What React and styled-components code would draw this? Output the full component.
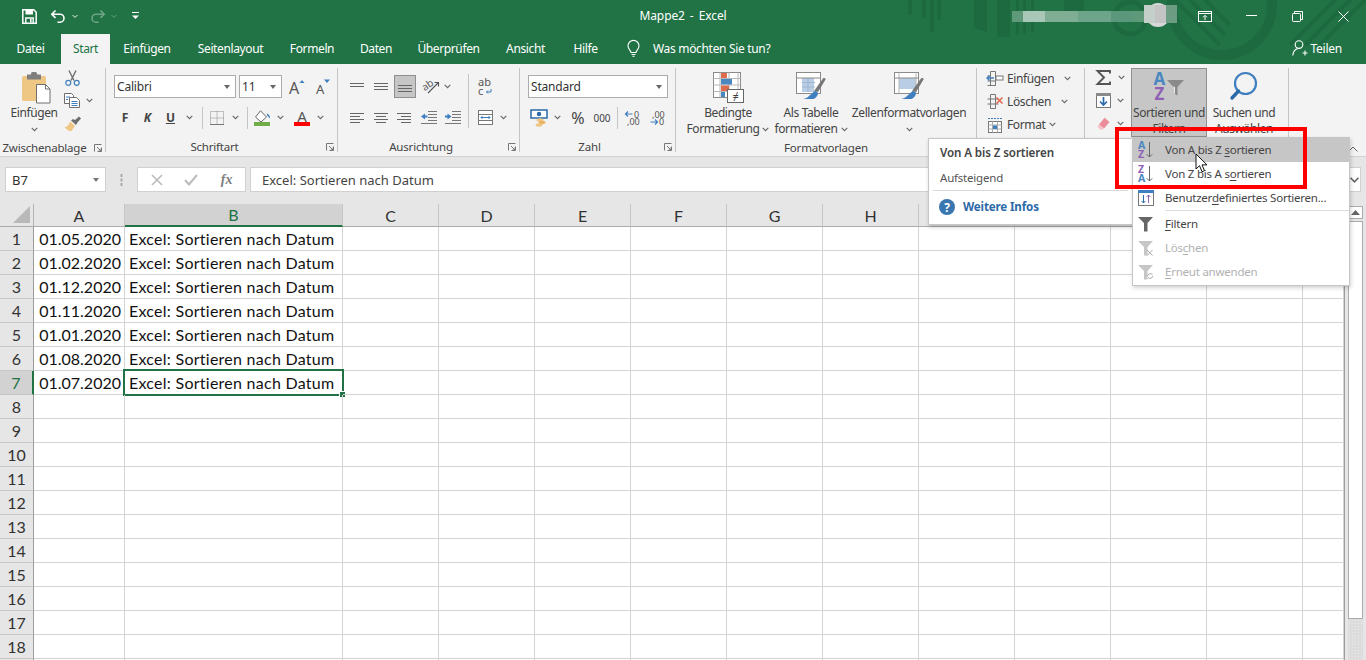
import React from "react";
import styled, { createGlobalStyle } from "styled-components";

const GlobalStyle = createGlobalStyle`
  html, body { margin: 0; padding: 0; background: #fff; }
  body { width: 1366px; height: 660px; overflow: hidden; font-family: "Noto Sans", "Liberation Sans", sans-serif; font-size: 12px; color: #444; }
  svg { display: block; flex: none; overflow: visible; }
`;

const Page = styled.div`
  position: relative;
  width: 1366px;
  height: 660px;
  overflow: hidden;
`;

/* ---------- header ---------- */
const Header = styled.div`
  position: relative;
  height: 64px;
  background: #217346;
  color: #fff;
`;
const HeaderArt = styled.svg`
  position: absolute;
  left: 0;
  top: 0;
`;
const TitleBar = styled.div`
  position: relative;
  height: 32px;
  display: grid;
  grid-template-columns: 1fr auto 1fr;
  align-items: center;
`;
const Qat = styled.div`
  display: flex;
  align-items: center;
  padding-left: 22px;
`;
const QatSlot = styled.span`
  width: ${(p) => p.$w}px;
  margin-left: ${(p) => p.$ml || 0}px;
  display: flex;
  justify-content: center;
`;
const Title = styled.div`
  font-size: 12px;
  letter-spacing: -0.1px;
  word-spacing: 2px;
  margin-top: -1px;
`;
const WindowButtons = styled.div`
  display: flex;
  justify-content: flex-end;
  align-items: center;
`;
const WinSlot = styled.span`
  width: 46px;
  display: flex;
  justify-content: center;
`;
const TabBar = styled.div`
  position: relative;
  height: 32px;
  display: flex;
  align-items: flex-end;
`;
const Tab = styled.div`
  width: ${(p) => p.$w}px;
  height: 30px;
  display: flex;
  align-items: center;
  justify-content: center;
  padding-bottom: 2px;
  box-sizing: border-box;
  font-size: 12px;
  letter-spacing: -0.38px;
  background: ${(p) => (p.$active ? "#f3f3f3" : "transparent")};
  color: ${(p) => (p.$active ? "#217346" : "#fff")};
`;
const TellMe = styled.div`
  display: flex;
  align-items: center;
  gap: 13px;
  height: 30px;
  padding: 0 0 2px 15px;
  box-sizing: border-box;
  font-size: 12px;
  letter-spacing: -0.32px;
`;
const Share = styled.div`
  margin-left: auto;
  display: flex;
  align-items: center;
  gap: 3px;
  height: 30px;
  padding: 0 24px 2px 0;
  box-sizing: border-box;
  font-size: 12px;
  letter-spacing: -0.25px;
`;

/* ---------- ribbon ---------- */
const Ribbon = styled.div`
  height: 93px;
  box-sizing: border-box;
  background: #f3f3f3;
  border-bottom: 1px solid #d2d2d2;
  display: flex;
  padding-top: 4px;
`;
const Group = styled.div`
  width: ${(p) => p.$w}px;
  height: 84px;
  box-sizing: border-box;
  border-right: 1px solid #c6c6c6;
  display: flex;
  flex-direction: column;
`;
const GroupBody = styled.div`
  height: 70px;
  display: flex;
  padding-left: ${(p) => p.$pl || 0}px;
`;
const Caption = styled.div`
  position: relative;
  height: 13px;
  padding-top: 3px;
  line-height: 16px;
  text-align: center;
  padding-right: ${(p) => p.$pr || 0}px;
  font-size: 11.5px;
  letter-spacing: -0.2px;
  color: #444;
`;
const Launcher = styled.span`
  position: absolute;
  right: 3px;
  top: 7px;
`;
const Stack = styled.div`
  display: flex;
  flex-direction: column;
  padding-top: 7px;
  gap: 8px;
  width: ${(p) => (p.$w ? `${p.$w}px` : "auto")};
`;
const ToolRow = styled.div`
  height: 23px;
  display: flex;
  align-items: center;
`;
const Tool = styled.span`
  width: ${(p) => p.$w || 24}px;
  height: 23px;
  margin-left: ${(p) => p.$ml || 0}px;
  display: flex;
  align-items: center;
  justify-content: center;
  font-size: ${(p) => p.$fs || 12}px;
  font-weight: ${(p) => p.$fw || 400};
  font-style: ${(p) => (p.$it ? "italic" : "normal")};
  text-decoration: ${(p) => (p.$ul ? "underline" : "none")};
  color: #444;
`;
const ActiveTool = styled(Tool)`
  box-sizing: border-box;
  background: #c6c6c6;
  border: 1px solid #8f8f8f;
`;
const RowSep = styled.span`
  width: 1px;
  height: 22px;
  margin: 0 ${(p) => p.$mr || 2}px 0 ${(p) => p.$ml || 2}px;
  background: #c6c6c6;
`;
const ColSep = styled.div`
  width: 1px;
  height: 54px;
  margin: 6px 3px 0 3px;
  background: #c6c6c6;
`;
const Select = styled.div`
  width: ${(p) => p.$w}px;
  height: 23px;
  margin-left: ${(p) => p.$ml || 0}px;
  box-sizing: border-box;
  border: 1px solid #ababab;
  background: #fff;
  display: flex;
  align-items: center;
  justify-content: space-between;
  padding: 0 5px 0 2px;
  font-size: 12px;
  letter-spacing: -0.2px;
  color: #333;
`;
const DownTri = styled.span`
  width: 0;
  height: 0;
  border-left: 3.5px solid transparent;
  border-right: 3.5px solid transparent;
  border-top: 4px solid ${(p) => p.$c || "#666"};
`;
const LargeButton = styled.div`
  width: ${(p) => p.$w}px;
  height: 69px;
  margin-left: ${(p) => p.$ml || 0}px;
  box-sizing: border-box;
  display: flex;
  flex-direction: column;
  align-items: center;
  padding-top: 4px;
  font-size: 12px;
  letter-spacing: -0.4px;
  line-height: 16px;
  color: #444;
  white-space: nowrap;
  background: ${(p) => (p.$on ? "#c6c6c6" : "transparent")};
  outline: ${(p) => (p.$on ? "1px solid #8f8f8f" : "none")};
  outline-offset: -1px;
`;
const LargeIcon = styled.div`
  height: 33px;
  margin-left: ${(p) => p.$ml || 0}px;
`;
const LabelLine = styled.div`
  height: 16px;
  display: flex;
  align-items: center;
  gap: 3px;
`;
const CellsStack = styled.div`
  display: flex;
  flex-direction: column;
  margin-top: ${(p) => p.$mt || 0}px;
`;
const CellsRow = styled.div`
  height: 23px;
  display: flex;
  align-items: center;
  gap: 4px;
  font-size: 12px;
  letter-spacing: -0.38px;
  color: #444;
`;
const CellsText = styled.span`
  width: ${(p) => p.$w}px;
`;
const CollapseSlot = styled.div`
  margin-left: auto;
  padding: 78px 8px 0 0;
`;

/* ---------- formula bar ---------- */
const FormulaRow = styled.div`
  height: 47px;
  box-sizing: border-box;
  background: #e6e6e6;
  padding: 10px 5px 0 5px;
  display: flex;
`;
const InputBox = styled.div`
  height: 25px;
  box-sizing: border-box;
  background: #fff;
  border: 1px solid #d0d0d0;
  display: flex;
  align-items: center;
`;
const NameBox = styled(InputBox)`
  width: 101px;
  justify-content: space-between;
  padding: 0 6px;
  font-size: 13px;
  color: #333;
`;
const GripSlot = styled.div`
  width: 31px;
  height: 25px;
  display: flex;
  align-items: center;
  justify-content: center;
`;
const ActionsBox = styled(InputBox)`
  width: 109px;
  justify-content: space-around;
  padding: 0 2px 0 2px;
  margin-right: 4px;
`;
const FormulaInput = styled(InputBox)`
  flex: 1;
  padding-left: 11px;
  font-size: 13px;
  color: #444;
`;
const ExpandBox = styled(InputBox)`
  width: 12px;
  justify-content: center;
  border-left: 0;
`;
const FxMark = styled.span`
  font-family: "Liberation Serif", serif;
  font-style: italic;
  font-size: 14px;
  font-weight: 700;
  color: #808080;
  margin-left: 2px;
`;

/* ---------- sheet ---------- */
const SheetArea = styled.div`
  display: flex;
  height: 456px;
  overflow: hidden;
`;
const Grid = styled.div`
  width: 1344px;
  display: grid;
  grid-template-columns: 34px 91px 218px repeat(10, 96px) 41px;
  grid-template-rows: 23px;
  grid-auto-rows: 24px;
  align-content: start;
  background: #fff;
  font-family: Lato, "Liberation Sans", sans-serif;
  font-size: 16px;
  color: #111;
`;
const Corner = styled.div`
  box-sizing: border-box;
  background: #e6e6e6;
  border-right: 1px solid #b4b4b4;
  border-bottom: 1px solid #ababab;
  display: flex;
  align-items: flex-end;
  justify-content: flex-end;
  padding: 0 3px 3px 0;
`;
const ColHead = styled.div`
  box-sizing: border-box;
  background: ${(p) => (p.$on ? "#d2d2d2" : "#e6e6e6")};
  color: ${(p) => (p.$on ? "#217346" : "#333")};
  border-right: 1px solid #c6c6c6;
  border-bottom: ${(p) => (p.$on ? "2px solid #217346" : "1px solid #ababab")};
  display: flex;
  align-items: center;
  justify-content: center;
`;
const RowHead = styled.div`
  box-sizing: border-box;
  background: ${(p) => (p.$on ? "#d2d2d2" : "#e6e6e6")};
  color: ${(p) => (p.$on ? "#217346" : "#333")};
  border-right: ${(p) => (p.$on ? "2px solid #217346" : "1px solid #9c9c9c")};
  border-bottom: 1px solid #c6c6c6;
  display: flex;
  align-items: center;
  justify-content: center;
`;
const Cell = styled.div`
  position: relative;
  box-sizing: border-box;
  border-right: 1px solid #d4d4d4;
  border-bottom: 1px solid #d4d4d4;
  display: flex;
  align-items: center;
  white-space: nowrap;
  letter-spacing: ${(p) => (p.$right ? "0" : "0.26px")};
  justify-content: ${(p) => (p.$right ? "flex-end" : "flex-start")};
  padding: ${(p) => (p.$right ? "0 3px 0 0" : "0 0 0 4px")};
`;
const Selection = styled.div`
  position: absolute;
  left: -2px;
  top: -2px;
  right: -2px;
  bottom: -2px;
  border: 2px solid #217346;
`;
const FillHandle = styled.div`
  position: absolute;
  right: -4px;
  bottom: -4px;
  width: 5px;
  height: 5px;
  background: #217346;
  border: 1px solid #fff;
`;
const ScrollBar = styled.div`
  width: 22px;
  box-sizing: border-box;
  background: #e6e6e6;
  border-left: 1px solid #9c9c9c;
  padding: 2px 3px 0 3px;
  display: flex;
  flex-direction: column;
`;
const ScrollUp = styled.div`
  height: 13px;
  margin-bottom: 2px;
  display: flex;
  align-items: center;
  justify-content: center;
  background: #fff;
  border: 1px solid #ababab;
  box-sizing: border-box;
`;
const Thumb = styled.div`
  height: 398px;
  box-sizing: border-box;
  background: #fff;
  border: 1px solid #ababab;
`;
const Track = styled.div`
  flex: 1;
  background-color: #dcdcdc;
  background-image: radial-gradient(#eaeaea 0.6px, transparent 0.7px);
  background-size: 3px 3px;
`;

/* ---------- overlays ---------- */
const Tip = styled.div`
  position: absolute;
  left: 928px;
  top: 138px;
  width: 205px;
  height: 87px;
  box-sizing: border-box;
  background: #fff;
  border: 1px solid #c6c6c6;
  box-shadow: 1px 2px 4px rgba(0, 0, 0, 0.22);
  padding: 0 4px;
  line-height: 16px;
  color: #555;
`;
const TipTitle = styled.div`
  padding: 6px 0 0 7px;
  font-size: 11.6px;
  font-weight: 600;
  letter-spacing: -0.1px;
  color: #444;
`;
const TipText = styled.div`
  height: 30px;
  box-sizing: border-box;
  padding: 9px 0 0 7px;
  border-bottom: 1px solid #d8d8d8;
  font-size: 11.5px;
  letter-spacing: -0.2px;
`;
const TipLink = styled.div`
  display: flex;
  align-items: center;
  gap: 8px;
  padding: 8px 0 0 6px;
  font-size: 11.6px;
  font-weight: 700;
  letter-spacing: -0.15px;
  color: #2b6aa8;
`;
const Menu = styled.div`
  position: absolute;
  left: 1132px;
  top: 137px;
  width: 218px;
  height: 149px;
  box-sizing: border-box;
  background: #fff;
  border: 1px solid #c6c6c6;
  box-shadow: 1px 2px 4px rgba(0, 0, 0, 0.18);
`;
const MenuItem = styled.div`
  height: 24px;
  display: flex;
  align-items: center;
  font-size: 11.5px;
  letter-spacing: -0.23px;
  background: ${(p) => (p.$hover ? "#c6c6c6" : "transparent")};
  color: ${(p) => (p.$off ? "#b1b1b1" : "#444")};
  u { text-underline-offset: 2px; }
`;
const MenuLabel = styled.span`
  padding-bottom: 2px;
`;
const MenuIcon = styled.span`
  width: 27px;
  padding-left: 5px;
  display: flex;
`;
const MenuSep = styled.div`
  height: 1px;
  margin: 0 0 1px 32px;
  background: #dedede;
`;
const RedBox = styled.div`
  position: absolute;
  left: 1115px;
  top: 127px;
  width: 192px;
  height: 62px;
  box-sizing: border-box;
  border: 4px solid #f00;
`;
const Cursor = styled.svg`
  position: absolute;
  left: 1195px;
  top: 153px;
`;

/* ---------- icons ---------- */
const Chev = ({ c = "#666", size = 7 }) => (
  <svg width={size} height={5} viewBox="0 0 7 5">
    <path d="M.7.8 3.5 3.6 6.3.8" fill="none" stroke={c} strokeWidth="1.1" />
  </svg>
);
const Line = ({ w = 14, lines }) => (
  <svg width={w} height={15} viewBox={`0 0 ${w} 15`}>
    {lines.map(([x1, x2, y], i) => (
      <rect key={i} x={x1} y={y} width={x2 - x1} height="1" fill="#666" />
    ))}
  </svg>
);
const SaveIcon = () => (
  <svg width="15" height="15" viewBox="0 0 15 15">
    <path d="M.8.8h11l2.4 2.4v11H.8z" fill="none" stroke="#fff" strokeWidth="1.5" />
    <rect x="3.5" y="1" width="7.5" height="4.5" fill="#fff" />
    <path d="M3.8 14V9h7.4v5" fill="none" stroke="#fff" strokeWidth="1.4" />
    <rect x="8" y="10" width="1.6" height="3.6" fill="#fff" />
  </svg>
);
const UndoIcon = ({ o = 1, flip }) => (
  <svg width="16" height="15" viewBox="0 0 16 15" opacity={o}>
    <path
      d="M5.500 1.500 1.800 5.200l3.700 3.700M2 5.200h8a4 4 0 0 1 0 8H7.500"
      fill="none"
      stroke="#fff"
      strokeWidth="1.6"
      transform={flip ? "matrix(-1 0 0 1 16 0)" : undefined}
    />
  </svg>
);
const CustomizeIcon = () => (
  <svg width="7" height="8" viewBox="0 0 7 8">
    <rect y="0" width="7" height="1" fill="#fff" />
    <path d="M0 3.500h7L3.500 7z" fill="#fff" />
  </svg>
);
const BulbIcon = () => (
  <svg width="13" height="17" viewBox="0 0 13 17">
    <path d="M4 12.500c0-2-3-3.200-3-6.600a5.500 5.500 0 0 1 11 0c0 3.400-3 4.600-3 6.600z" fill="none" stroke="#fff" strokeWidth="1.1" />
    <path d="M4.500 14.500h4M5.500 16.300h2" stroke="#fff" strokeWidth="1" />
  </svg>
);
const PersonIcon = () => (
  <svg width="16" height="16" viewBox="0 0 16 16">
    <circle cx="7" cy="4.600" r="3.800" fill="none" stroke="#fff" strokeWidth="1.1" />
    <path d="M.8 15.500c.3-3.700 2.400-6.200 5-7M10.500 13h5M13 10.500v5" fill="none" stroke="#fff" strokeWidth="1.1" />
  </svg>
);
const DisplayIcon = () => (
  <svg width="14" height="11" viewBox="0 0 14 11">
    <rect x=".5" y=".5" width="13" height="10" fill="none" stroke="#fff" />
    <path d="M1 2.500h12" stroke="#fff" />
    <path d="M7 9V4.500M5 6.300l2-2 2 2" fill="none" stroke="#fff" />
  </svg>
);
const MinIcon = () => (
  <svg width="11" height="2" viewBox="0 0 11 2"><rect width="11" height="1" fill="#fff" /></svg>
);
const RestoreIcon = () => (
  <svg width="11" height="11" viewBox="0 0 11 11">
    <rect x=".5" y="2.500" width="8" height="8" rx=".8" fill="none" stroke="#fff" />
    <path d="M2.500 2.500v-2h8v8h-2" fill="none" stroke="#fff" />
  </svg>
);
const CloseIcon = () => (
  <svg width="11" height="11" viewBox="0 0 11 11">
    <path d="M.5.500l10 10M10.500.500l-10 10" stroke="#fff" />
  </svg>
);
const PasteIcon = () => (
  <svg width="30" height="32" viewBox="0 0 30 32">
    <rect x="0" y="4" width="24" height="25" rx="1.500" fill="#eec785" />
    <rect x="5" y="2.500" width="14" height="5" fill="#7f7f7f" />
    <rect x="9" y="0" width="6" height="4" rx="1.500" fill="#7f7f7f" />
    <path d="M14.500 12.500h9l4.500 4.500v14h-13.500z" fill="#fff" stroke="#6e6e6e" />
    <path d="M23.500 12.500v4.500h4.500" fill="none" stroke="#6e6e6e" />
  </svg>
);
const CutIcon = () => (
  <svg width="15" height="16" viewBox="0 0 15 16">
    <path d="M4 .5l5 10M11 .5l-5 10" stroke="#6e6e6e" strokeWidth="1.4" />
    <circle cx="3.300" cy="12.800" r="2.500" fill="none" stroke="#3f7fbf" strokeWidth="1.2" />
    <circle cx="11.700" cy="12.800" r="2.500" fill="none" stroke="#3f7fbf" strokeWidth="1.2" />
  </svg>
);
const CopyIcon = () => (
  <svg width="16" height="15" viewBox="0 0 16 15">
    <path d="M.5.500h7l2 2v8h-9z" fill="#fff" stroke="#6e6e6e" />
    <path d="M5.500 4.500h7l3 3v7h-10z" fill="#fff" stroke="#6e6e6e" />
    <path d="M2 4h4M2 6.500h2M7.500 8.500h6M7.500 10.500h6M7.500 12.500h6" stroke="#3f7fbf" />
  </svg>
);
const BrushIcon = () => (
  <svg width="17" height="15" viewBox="0 0 17 15">
    <path d="M6 5.500l5 4.500-3.500 5H5L.5 11.500C3 11 5 8.500 6 5.500z" fill="#eec785" />
    <path d="M7 4.500l5 4.500 1.500-2.500L17 2.500 15 .5l-4 3.500-2-1z" fill="#6e6e6e" />
  </svg>
);
const GrowIcon = ({ small, up }) => (
  <svg width="18" height="18" viewBox="0 0 18 18">
    <text x={small ? 3 : 0} y="16" fontFamily="Noto Sans, sans-serif" fontSize={small ? 13 : 16} fill="#555">A</text>
    <path d={up ? "M10.500 5l2.500-3 2.500 3z" : "M11 1.500h6L14 5z"} fill="#3f7fbf" />
  </svg>
);
const BorderIcon = () => (
  <svg width="14" height="14" viewBox="0 0 14 14">
    <rect x=".5" y=".5" width="13" height="13" fill="none" stroke="#888" strokeDasharray="1 1" />
    <path d="M7 .5v13M.5 7h13" stroke="#888" strokeDasharray="1 1" />
    <path d="M0 13.500h14" stroke="#777" />
  </svg>
);
const FillIcon = () => (
  <svg width="17" height="16" viewBox="0 0 17 16">
    <path d="M6.500.8 12.500 7 7 12 1.500 7z" fill="#fff" stroke="#666" />
    <path d="M12.500 3.500c2 .5 3.500 2 3.500 5l-2.500-2.500z" fill="#3f7fbf" />
    <rect y="12" width="16" height="4" fill="#70ad47" />
  </svg>
);
const ColorIcon = () => (
  <svg width="16" height="16" viewBox="0 0 16 16">
    <text x="8" y="12" textAnchor="middle" fontFamily="Noto Sans, sans-serif" fontSize="15" fill="#555">A</text>
    <rect y="12" width="16" height="4" fill="#f00" />
  </svg>
);
const OrientIcon = () => (
  <svg width="17" height="17" viewBox="0 0 17 17">
    <text x="0" y="10" fontFamily="Noto Sans, sans-serif" fontSize="10" fill="#555" transform="rotate(-35 6 9)">ab</text>
    <path d="M5 15 15 5M11.500 4.500H15.500V8.500" fill="none" stroke="#555" strokeWidth="1.1" />
  </svg>
);
const WrapIcon = () => (
  <svg width="14" height="18" viewBox="0 0 14 18">
    <text x="0" y="8" fontFamily="Noto Sans, sans-serif" fontSize="11" fill="#555">ab</text>
    <text x="0" y="17" fontFamily="Noto Sans, sans-serif" fontSize="11" fill="#555">c</text>
    <path d="M13 11v3H8.500M10 12.500 8.500 14l1.500 1.500" fill="none" stroke="#3f7fbf" />
  </svg>
);
const IndentIcon = ({ out }) => (
  <svg width="16" height="13" viewBox="0 0 16 13">
    <path d="M7 .5h9M7 3.500h9M7 6.500h9M7 9.500h9M0 12.500h16" stroke="#777" />
    <path d={out ? "M0 5.500 4 2.500v2h2.500v2H4v2z" : "M6.500 5.500 2.500 2.500v2H0v2h2.500v2z"} fill="#3f7fbf" />
  </svg>
);
const MergeIcon = () => (
  <svg width="15" height="15" viewBox="0 0 15 15">
    <rect x=".5" y=".5" width="14" height="14" fill="#fff" stroke="#777" />
    <path d="M.5 4.500h14M.5 10.500h14" stroke="#777" />
    <path d="M3 7.500h9M4.500 6 3 7.500 4.500 9M10.500 6 12 7.500 10.500 9" fill="none" stroke="#3f7fbf" />
  </svg>
);
const CurrencyIcon = () => (
  <svg width="17" height="18" viewBox="0 0 17 18">
    <rect x="0" y="1" width="16" height="8" fill="#fff" stroke="#2b6aa8" strokeWidth="1.5" />
    <circle cx="8" cy="5" r="2.200" fill="#2b6aa8" />
    <ellipse cx="9" cy="11" rx="3.500" ry="1.700" fill="#eec785" />
    <ellipse cx="11" cy="13.500" rx="3.500" ry="1.700" fill="#e9b35f" />
    <ellipse cx="8" cy="16" rx="3.500" ry="1.700" fill="#eec785" />
  </svg>
);
const DecimalIcon = ({ inc }) => (
  <svg width="17" height="16" viewBox="0 0 17 16">
    <text x={inc ? 10 : 3} y="7.500" fontFamily="Noto Sans, sans-serif" fontSize="9" fill="#555">{inc ? "0" : ",00"}</text>
    <text x={inc ? 3 : 10} y="15" fontFamily="Noto Sans, sans-serif" fontSize="9" fill="#555">{inc ? ",00" : "0"}</text>
    <path
      d={inc ? "M1.500 4h7M4 1.500 1.500 4 4 6.500" : "M1.500 12h7M6 9.500 8.500 12 6 14.500"}
      fill="none"
      stroke="#3f7fbf"
      strokeWidth="1.2"
    />
  </svg>
);
const CondIcon = () => (
  <svg width="31" height="31" viewBox="0 0 31 31">
    <rect x=".5" y=".5" width="27" height="25" fill="#fff" stroke="#8a8a8a" />
    <path d="M7 .5v25M16 .5v25M25 .5v25M.5 6.500h27M.5 13h27M.5 19.500h27" stroke="#b8b8b8" />
    <rect x="8" y="1" width="6" height="5" fill="#dd6b4d" />
    <rect x="8" y="7" width="11" height="5.500" fill="#4a86c0" />
    <rect x="8" y="13.500" width="8" height="5.500" fill="#dd6b4d" />
    <rect x="8" y="20" width="4" height="5" fill="#4a86c0" />
    <rect x="14.500" y="17.500" width="16" height="13" fill="#fff" stroke="#666" />
    <text x="22.500" y="28" textAnchor="middle" fontFamily="Noto Sans, sans-serif" fontSize="11" fill="#444">≠</text>
  </svg>
);
const TableIcon = ({ big }) => (
  <svg width="30" height="30" viewBox="0 0 30 30">
    <rect x=".5" y=".5" width="24" height="21" fill="#fff" stroke="#8a8a8a" />
    <rect x={big ? 5 : 6} y="6" width={big ? 17 : 12} height={big ? 11 : 14} fill="#b9cde5" />
    {!big && <path d="M6 10.500h13M6 15h13M12 6v14" stroke="#9fb5d0" />}
    {big && <path d="M5 .5v21M22 .5v21" stroke="#b8b8b8" />}
    <path d="M.5 6h24" stroke="#8a8a8a" />
    <path d="M18 19 27 6.500c1-.8 2.500-.3 2.500 1L22 20z" fill="#777" />
    <path d="M14 23c2.500-1 3.500-4 5-4s3 1.500 3 2.500c-.5 3-2.500 4.500-4.500 5.500H7.500c3-.8 5-2 6.500-4z" fill="#3f7fbf" />
  </svg>
);
const InsertIcon = () => (
  <svg width="16" height="15" viewBox="0 0 16 15">
    <path d="M3.500.5h5v14h-5zM.5 10h8M.5 5h3M.5 14.500h8" fill="none" stroke="#777" />
    <rect x="9" y="5" width="7" height="4" fill="#fff" stroke="#777" />
    <path d="M0 7h7M2.500 4.500 0 7l2.500 2.500" fill="none" stroke="#3f7fbf" strokeWidth="1.3" />
  </svg>
);
const DeleteIcon = () => (
  <svg width="16" height="15" viewBox="0 0 16 15">
    <path d="M3.500.5h5v14h-5zM.5 5h11M.5 10h11" fill="none" stroke="#777" />
    <path d="M9.500 3.500l6 6M15.500 3.500l-6 6" stroke="#e2674a" strokeWidth="1.5" />
  </svg>
);
const FormatIcon = () => (
  <svg width="16" height="16" viewBox="0 0 16 16">
    <path d="M1 1.500h14" stroke="#3f7fbf" strokeDasharray="2 1" />
    <rect x="1.500" y="4.500" width="13" height="11" fill="#fff" stroke="#777" />
    <path d="M1.500 8h13M1.500 12h13M5.500 4.500v11M10.500 4.500v11" stroke="#aaa" />
    <rect x="6" y="8.500" width="4" height="3.500" fill="#3f7fbf" />
  </svg>
);
const SumIcon = () => (
  <svg width="15" height="15" viewBox="0 0 15 15">
    <path d="M14 3.500V1H1.500L8 7.500 1.500 14H14v-2.500" fill="none" stroke="#555" strokeWidth="1.9" />
  </svg>
);
const FillDownIcon = () => (
  <svg width="15" height="15" viewBox="0 0 15 15">
    <rect x=".5" y=".5" width="14" height="14" fill="#fff" stroke="#777" />
    <rect x="0" y="0" width="15" height="3" fill="#8a8a8a" />
    <path d="M7.500 4v8M4 8.500l3.500 3.500L11 8.500" fill="none" stroke="#2b6aa8" strokeWidth="1.7" />
  </svg>
);
const EraserIcon = () => (
  <svg width="13" height="13" viewBox="0 0 13 13">
    <path d="M7.500.8 12.500 5 7 11.500 2 7.500z" fill="#ea8d99" />
    <path d="M2 7.500.5 9.500 3 12.500H6l1-1z" fill="#f4c1c8" />
  </svg>
);
const AzText = ({ x, y, c, fs, children }) => (
  <text x={x} y={y} fontFamily="Noto Sans, sans-serif" fontWeight="700" fontSize={fs} fill={c}>{children}</text>
);
const SortBigIcon = () => (
  <svg width="30" height="30" viewBox="0 0 30 30">
    <AzText x="-.5" y="13" c="#4a86c0" fs="17">A</AzText>
    <AzText x="0.500" y="28" c="#8e5fb5" fs="17">Z</AzText>
    <path d="M13 8h17l-6.500 7v8.500l-4-2.500v-6z" fill="#8a8a8a" />
    <path d="M19.500 14.500v6.500l1.500 1V15z" fill="#e8e8e8" />
  </svg>
);
const SearchIcon = () => (
  <svg width="28" height="28" viewBox="0 0 28 28">
    <circle cx="15.500" cy="11.500" r="10.500" fill="none" stroke="#3f7fbf" strokeWidth="2.2" />
    <path d="M8.500 19 2 26" stroke="#2b6aa8" strokeWidth="3.400" strokeLinecap="round" />
  </svg>
);
const SortSmallIcon = ({ top, bottom, topC, bottomC }) => (
  <svg width="16" height="18" viewBox="0 0 16 18">
    <AzText x="0" y="8" c={topC} fs="10.500">{top}</AzText>
    <AzText x="0" y="17" c={bottomC} fs="10.500">{bottom}</AzText>
    <path d="M11.500 1v15M8.800 13.300 11.500 16l2.700-2.700" fill="none" stroke="#666" />
  </svg>
);
const CustomSortIcon = () => (
  <svg width="16" height="16" viewBox="0 0 16 16">
    <rect x=".5" y=".5" width="15" height="15" fill="#fff" stroke="#777" />
    <rect width="16" height="3" fill="#3f7fbf" />
    <path d="M5.500 5v8M3.500 11l2 2 2-2" fill="none" stroke="#2b6aa8" />
    <path d="M10.500 13V5M8.500 7l2-2 2 2" fill="none" stroke="#8e5fb5" />
  </svg>
);
const FunnelIcon = ({ c = "#666", children }) => (
  <svg width="16" height="15" viewBox="0 0 16 15">
    <path d="M0 0h15L9.500 6v8.500h-3.500V6z" fill={c} />
    {children}
  </svg>
);
const InfoIcon = () => (
  <svg width="16" height="16" viewBox="0 0 16 16">
    <circle cx="8" cy="8" r="8" fill="#3a76b0" />
    <text x="8" y="12.500" textAnchor="middle" fontFamily="Noto Sans, sans-serif" fontWeight="700" fontSize="12" fill="#fff">?</text>
  </svg>
);
const LauncherIcon = () => (
  <svg width="8" height="8" viewBox="0 0 8 8">
    <path d="M.5 7.500v-7h7M7.500 3.500v4h-4M3 3l4 4M7 4.500V7H4.500" fill="none" stroke="#777" />
  </svg>
);

const ALIGN_ROW_1 = [
  [[0, 14, 4], [0, 14, 7]],
  [[0, 14, 6], [0, 14, 9], [0, 14, 12]],
];
const ALIGN_ROW_2 = [
  [[0, 14, 3], [0, 10, 6], [0, 14, 9], [0, 10, 12]],
  [[0, 14, 3], [2, 12, 6], [0, 14, 9], [2, 12, 12]],
  [[0, 14, 3], [4, 14, 6], [0, 14, 9], [4, 14, 12]],
];

const COLUMNS = ["A", "B", "C", "D", "E", "F", "G", "H", "I", "J", "K", "L", "M"];
const DATES = ["01.05.2020", "01.02.2020", "01.12.2020", "01.11.2020", "01.01.2020", "01.08.2020", "01.07.2020"];
const TEXT = "Excel: Sortieren nach Datum";
const ROW_COUNT = 19;
const TABS = [
  ["Datei", 61], ["Start", 49, true], ["Einfügen", 74], ["Seitenlayout", 93], ["Formeln", 70],
  ["Daten", 58], ["Überprüfen", 87], ["Ansicht", 67], ["Hilfe", 53],
];

function SheetRow({ index }) {
  const date = DATES[index - 1];
  const active = index === 7;
  return (
    <>
      <RowHead $on={active}>{index}</RowHead>
      {COLUMNS.map((col) => (
        <Cell key={col} $right={col === "A"}>
          {col === "A" && date}
          {col === "B" && date && TEXT}
          {col === "B" && active && (
            <Selection>
              <FillHandle />
            </Selection>
          )}
        </Cell>
      ))}
    </>
  );
}

export default function App() {
  return (
    <Page>
      <GlobalStyle />
      <Header>
        <HeaderArt width="1366" height="64" viewBox="0 0 1366 64">
          <g fill="none" stroke="#1e6a40">
            <circle cx="1222" cy="5" r="50" strokeWidth="10" />
            <circle cx="1130" cy="18" r="16" strokeWidth="5" />
            <path d="M1170-5l50 50M1185-5l40 40M1200-5l30 30M1290 45l60-60M1305 45l60-60M1320 45l46-46" strokeWidth="4" />
          </g>
          <g fill="#1e6a40">
            <rect x="908" y="0" width="4" height="15" />
            <rect x="922" y="0" width="4" height="18" />
            <rect x="930" y="0" width="4" height="32" />
            <rect x="937" y="0" width="4" height="20" />
            <path d="M974 0h13v32l-13-4z" />
            <rect x="997" y="0" width="13" height="37" />
            <rect x="1016" y="0" width="3" height="35" />
            <rect x="1023" y="0" width="3" height="34" />
            <rect x="1031" y="0" width="3" height="32" />
            <rect x="1064" y="0" width="20" height="12" />
          </g>
          <g>
            <rect x="1012" y="11" width="165" height="11" fill="#5e9a7a" />
            <rect x="1023" y="11" width="22" height="11" fill="#a9c7b6" />
            <rect x="1045" y="11" width="45" height="11" fill="#7fae95" />
            <rect x="1078" y="11" width="33" height="11" fill="#6ea58a" />
            <rect x="1111" y="11" width="22" height="11" fill="#5b977a" />
            <circle cx="1158" cy="15" r="12" fill="#d8d8d8" />
            <rect x="1144" y="5" width="11" height="18" fill="#c4cfc9" />
            <rect x="1155" y="5" width="11" height="18" fill="#c4c4c4" />
            <rect x="1166" y="5" width="11" height="18" fill="#6c9d83" />
          </g>
        </HeaderArt>
        <TitleBar>
          <Qat>
            <SaveIcon />
            <QatSlot $w={16} $ml={13}><UndoIcon /></QatSlot>
            <QatSlot $w={14} $ml={2}><Chev c="#fff" size={6} /></QatSlot>
            <QatSlot $w={16} $ml={8}><UndoIcon flip o={0.35} /></QatSlot>
            <QatSlot $w={16}><Chev c="#6aa084" size={6} /></QatSlot>
            <QatSlot $w={14} $ml={6}><CustomizeIcon /></QatSlot>
          </Qat>
          <Title>Mappe2 - Excel</Title>
          <WindowButtons>
            <WinSlot><DisplayIcon /></WinSlot>
            <WinSlot><MinIcon /></WinSlot>
            <WinSlot><RestoreIcon /></WinSlot>
            <WinSlot><CloseIcon /></WinSlot>
          </WindowButtons>
        </TitleBar>
        <TabBar>
          {TABS.map(([name, w, active]) => (
            <Tab key={name} $w={w} $active={active}>{name}</Tab>
          ))}
          <TellMe><BulbIcon />Was möchten Sie tun?</TellMe>
          <Share><PersonIcon />Teilen</Share>
        </TabBar>
      </Header>

      <Ribbon>
        <Group $w={106}>
          <GroupBody $pl={3}>
            <LargeButton $w={62}>
              <LargeIcon $ml={6}><PasteIcon /></LargeIcon>
              <LabelLine>Einfügen</LabelLine>
              <LabelLine><Chev /></LabelLine>
            </LargeButton>
            <CellsStack $mt={-2}>
              <ToolRow><Tool $w={14}><CutIcon /></Tool></ToolRow>
              <ToolRow><Tool $w={14}><CopyIcon /></Tool><Tool $w={14} $ml={3}><Chev /></Tool></ToolRow>
              <ToolRow><Tool $w={14}><BrushIcon /></Tool></ToolRow>
            </CellsStack>
          </GroupBody>
          <Caption $pr={16}>Zwischenablage<Launcher><LauncherIcon /></Launcher></Caption>
        </Group>

        <Group $w={232}>
          <GroupBody $pl={8}>
            <Stack>
              <ToolRow>
                <Select $w={122}>Calibri<DownTri /></Select>
                <Select $w={43} $ml={3}>11<DownTri /></Select>
                <Tool $w={24} $ml={4}><GrowIcon up /></Tool>
                <Tool $w={24}><GrowIcon small /></Tool>
              </ToolRow>
              <ToolRow>
                <Tool $w={22} $fw={700}>F</Tool>
                <Tool $w={23} $fw={700} $it>K</Tool>
                <Tool $w={23} $fw={700} $ul>U</Tool>
                <Tool $w={14}><Chev /></Tool>
                <RowSep $ml={6} $mr={2} />
                <Tool $w={24}><BorderIcon /></Tool>
                <Tool $w={13}><Chev /></Tool>
                <RowSep $ml={5} $mr={2} />
                <Tool $w={24}><FillIcon /></Tool>
                <Tool $w={13}><Chev /></Tool>
                <Tool $w={24} $ml={3}><ColorIcon /></Tool>
                <Tool $w={12}><Chev /></Tool>
              </ToolRow>
            </Stack>
          </GroupBody>
          <Caption $pr={14}>Schriftart<Launcher><LauncherIcon /></Launcher></Caption>
        </Group>

        <Group $w={182}>
          <GroupBody $pl={7}>
            <Stack $w={120}>
              <ToolRow>
                <Tool><Line lines={ALIGN_ROW_1[0]} /></Tool>
                <Tool><Line lines={[[0, 14, 4], [0, 14, 7], [0, 14, 10]]} /></Tool>
                <ActiveTool $w={22} $ml={1}><Line lines={ALIGN_ROW_1[1]} /></ActiveTool>
                <Tool $ml={3}><OrientIcon /></Tool>
                <Tool $w={8}><Chev /></Tool>
              </ToolRow>
              <ToolRow>
                {ALIGN_ROW_2.map((lines, i) => (
                  <Tool key={i}><Line lines={lines} /></Tool>
                ))}
                <Tool $ml={1}><IndentIcon out /></Tool>
                <Tool><IndentIcon /></Tool>
              </ToolRow>
            </Stack>
            <ColSep />
            <Stack>
              <ToolRow><Tool $w={24} $ml={1}><WrapIcon /></Tool></ToolRow>
              <ToolRow>
                <Tool $w={24} $ml={1}><MergeIcon /></Tool>
                <Tool $w={12}><Chev /></Tool>
              </ToolRow>
            </Stack>
          </GroupBody>
          <Caption $pr={15}>Ausrichtung<Launcher><LauncherIcon /></Launcher></Caption>
        </Group>

        <Group $w={156}>
          <GroupBody $pl={8}>
            <Stack>
              <ToolRow><Select $w={140}>Standard<DownTri /></Select></ToolRow>
              <ToolRow>
                <Tool $ml={-1}><CurrencyIcon /></Tool>
                <Tool $w={12}><Chev /></Tool>
                <Tool $ml={3} $fs={16}>%</Tool>
                <Tool $fs={10}>000</Tool>
                <RowSep $ml={3} $mr={2} />
                <Tool><DecimalIcon inc /></Tool>
                <Tool $ml={1}><DecimalIcon /></Tool>
              </ToolRow>
            </Stack>
          </GroupBody>
          <Caption $pr={16}>Zahl<Launcher><LauncherIcon /></Launcher></Caption>
        </Group>

        <Group $w={301}>
          <GroupBody $pl={8}>
            <LargeButton $w={88}>
              <LargeIcon><CondIcon /></LargeIcon>
              <LabelLine>Bedingte</LabelLine>
              <LabelLine>Formatierung <Chev /></LabelLine>
            </LargeButton>
            <LargeButton $w={78}>
              <LargeIcon><TableIcon /></LargeIcon>
              <LabelLine>Als Tabelle</LabelLine>
              <LabelLine>formatieren <Chev /></LabelLine>
            </LargeButton>
            <LargeButton $w={118}>
              <LargeIcon><TableIcon big /></LargeIcon>
              <LabelLine>Zellenformatvorlagen</LabelLine>
              <LabelLine><Chev /></LabelLine>
            </LargeButton>
          </GroupBody>
          <Caption>Formatvorlagen</Caption>
        </Group>

        <Group $w={108}>
          <GroupBody $pl={10}>
            <CellsStack $mt={-1}>
              <CellsRow><InsertIcon /><CellsText $w={53}>Einfügen</CellsText><Chev /></CellsRow>
              <CellsRow><DeleteIcon /><CellsText $w={50}>Löschen</CellsText><Chev /></CellsRow>
              <CellsRow><FormatIcon /><CellsText $w={38}>Format</CellsText><Chev /></CellsRow>
            </CellsStack>
          </GroupBody>
          <Caption>Zellen</Caption>
        </Group>

        <Group $w={204}>
          <GroupBody $pl={11}>
            <CellsStack $mt={-2}>
              <ToolRow><SumIcon /><Tool $w={12} $ml={4}><Chev /></Tool></ToolRow>
              <ToolRow><FillDownIcon /><Tool $w={12} $ml={3}><Chev /></Tool></ToolRow>
              <ToolRow><Tool $w={15}><EraserIcon /></Tool><Tool $w={12} $ml={3}><Chev /></Tool></ToolRow>
            </CellsStack>
            <LargeButton $w={76} $on $ml={4}>
              <LargeIcon><SortBigIcon /></LargeIcon>
              <LabelLine>Sortieren und</LabelLine>
              <LabelLine>Filtern</LabelLine>
            </LargeButton>
            <LargeButton $w={74}>
              <LargeIcon><SearchIcon /></LargeIcon>
              <LabelLine>Suchen und</LabelLine>
              <LabelLine>Auswählen</LabelLine>
            </LargeButton>
          </GroupBody>
          <Caption>Bearbeiten</Caption>
        </Group>

        <CollapseSlot>
          <svg width="10" height="6" viewBox="0 0 10 6">
            <path d="M.5 5.500 5 1l4.500 4.500" fill="none" stroke="#666" />
          </svg>
        </CollapseSlot>
      </Ribbon>

      <FormulaRow>
        <NameBox>B7<DownTri $c="#777" /></NameBox>
        <GripSlot>
          <svg width="3" height="12" viewBox="0 0 3 12">
            <path d="M1.500 0v3M1.500 4.500v3M1.500 9v3" stroke="#aaa" strokeWidth="2" />
          </svg>
        </GripSlot>
        <ActionsBox>
          <svg width="12" height="12" viewBox="0 0 12 12"><path d="M1 1l10 10M11 1 1 11" stroke="#bbb" strokeWidth="1.6" /></svg>
          <svg width="14" height="12" viewBox="0 0 14 12"><path d="M1 6l4 4.500L13 1" fill="none" stroke="#bbb" strokeWidth="2" /></svg>
          <FxMark>fx</FxMark>
        </ActionsBox>
        <FormulaInput>{TEXT}</FormulaInput>
        <ExpandBox>
          <svg width="9" height="6" viewBox="0 0 9 6"><path d="M.5.800 4.500 4.800 8.500.8" fill="none" stroke="#666" strokeWidth="1.6" /></svg>
        </ExpandBox>
      </FormulaRow>

      <SheetArea>
        <Grid>
          <Corner>
            <svg width="17" height="17" viewBox="0 0 17 17"><path d="M17 0v17H0z" fill="#b9b9b9" /></svg>
          </Corner>
          {COLUMNS.map((col) => (
            <ColHead key={col} $on={col === "B"}>{col}</ColHead>
          ))}
          {Array.from({ length: ROW_COUNT }, (_, i) => (
            <SheetRow key={i} index={i + 1} />
          ))}
        </Grid>
        <ScrollBar>
          <ScrollUp>
            <svg width="9" height="5" viewBox="0 0 9 5"><path d="M4.500 0 9 5H0z" fill="#666" /></svg>
          </ScrollUp>
          <Thumb />
          <Track />
        </ScrollBar>
      </SheetArea>

      <Tip>
        <TipTitle>Von A bis Z sortieren</TipTitle>
        <TipText>Aufsteigend</TipText>
        <TipLink><InfoIcon />Weitere Infos</TipLink>
      </Tip>

      <Menu>
        <MenuItem $hover>
          <MenuIcon><SortSmallIcon top="A" bottom="Z" topC="#4a86c0" bottomC="#8e5fb5" /></MenuIcon>
          <MenuLabel>Von A bis Z <u>s</u>ortieren</MenuLabel>
        </MenuItem>
        <MenuItem>
          <MenuIcon><SortSmallIcon top="Z" bottom="A" topC="#8e5fb5" bottomC="#4a86c0" /></MenuIcon>
          <MenuLabel>Von Z bis A s<u>o</u>rtieren</MenuLabel>
        </MenuItem>
        <MenuItem>
          <MenuIcon><CustomSortIcon /></MenuIcon>
          <MenuLabel>Benutzer<u>d</u>efiniertes Sortieren...</MenuLabel>
        </MenuItem>
        <MenuSep />
        <MenuItem>
          <MenuIcon><FunnelIcon /></MenuIcon>
          <MenuLabel><u>F</u>iltern</MenuLabel>
        </MenuItem>
        <MenuItem $off>
          <MenuIcon>
            <FunnelIcon c="#c6c6c6"><path d="M9 9l5.500 5.500M14.500 9 9 14.500" stroke="#aaa" /></FunnelIcon>
          </MenuIcon>
          <MenuLabel>Lös<u>c</u>hen</MenuLabel>
        </MenuItem>
        <MenuItem $off>
          <MenuIcon>
            <FunnelIcon c="#c6c6c6"><path d="M9.500 11a3 3 0 0 1 5-1.500M15 11a3 3 0 0 1-5 1.500" fill="none" stroke="#aaa" /></FunnelIcon>
          </MenuIcon>
          <MenuLabel><u>E</u>rneut anwenden</MenuLabel>
        </MenuItem>
      </Menu>

      <RedBox />
      <Cursor width="14" height="20" viewBox="0 0 14 20">
        <path d="M1 1v15l3.500-3.300 2.500 6 2.500-1-2.500-5.800H12z" fill="#fff" stroke="#111" />
      </Cursor>
    </Page>
  );
}
